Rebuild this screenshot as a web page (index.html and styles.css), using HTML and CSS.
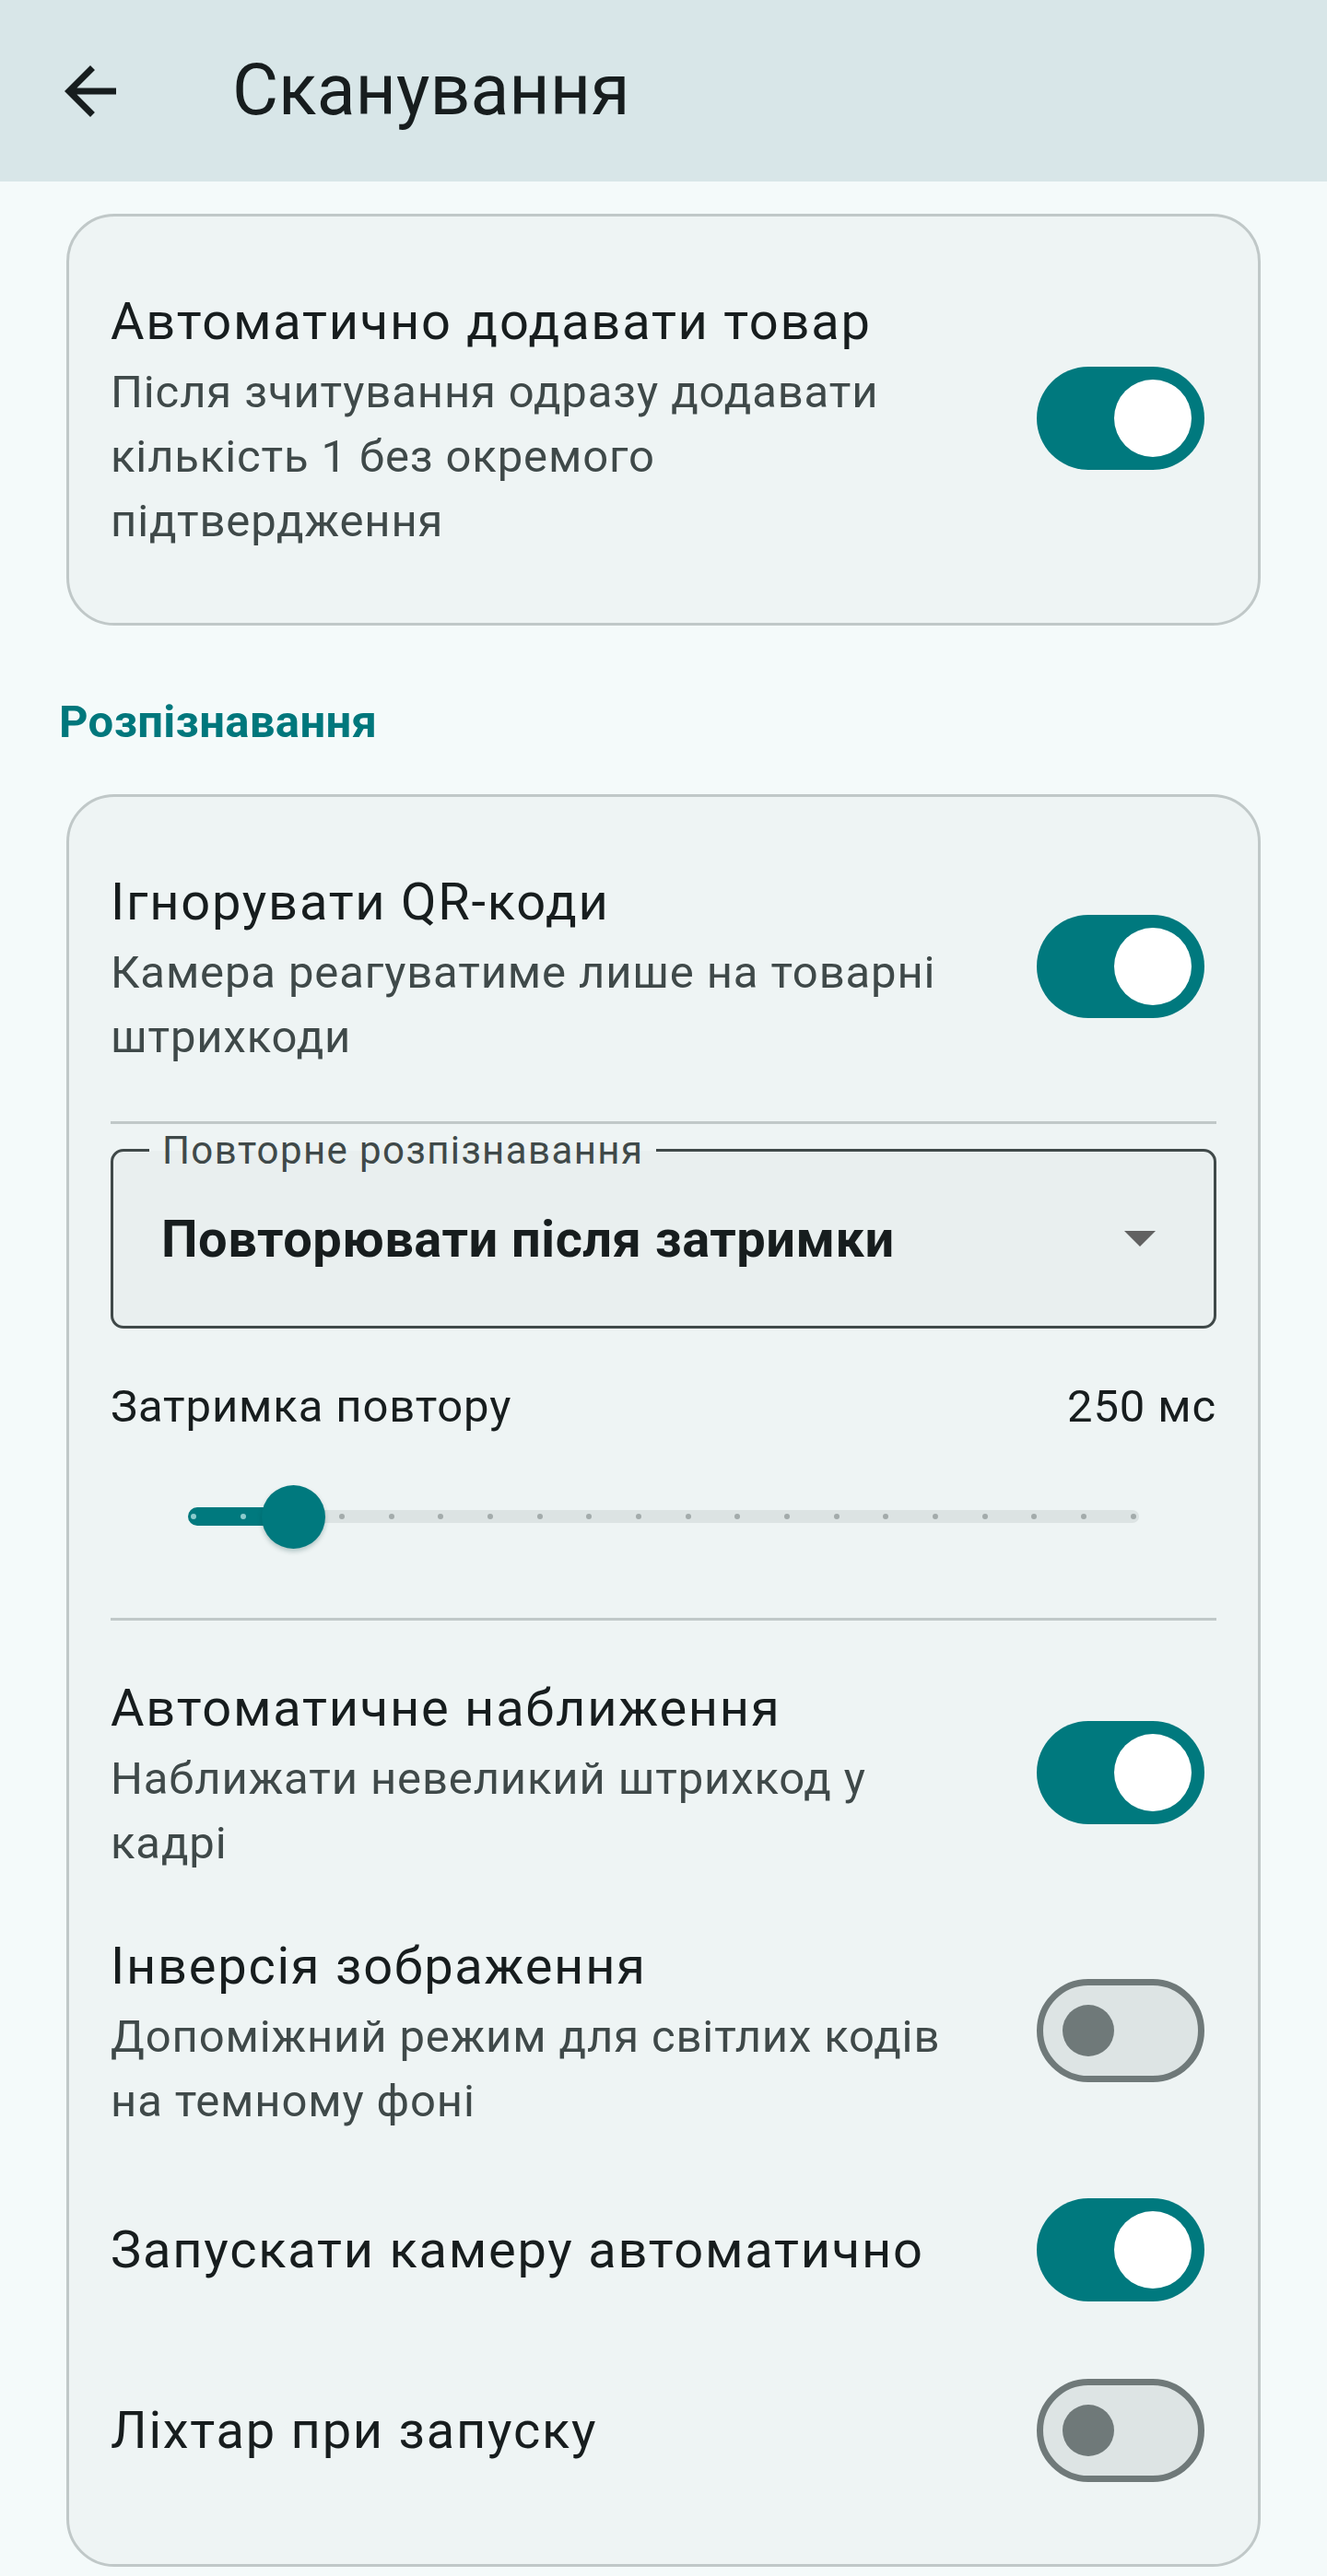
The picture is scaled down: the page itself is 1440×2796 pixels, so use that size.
FILE: index.html
```html
<!DOCTYPE html>
<html lang="uk">

<head>
    <meta charset="UTF-8">
    <meta name="viewport" content="width=device-width, initial-scale=1.0">
    <title>Сканування</title>
    <link rel="stylesheet" href="styles.css">
</head>

<body>
    <header class="topbar">
        <button class="back" aria-label="Назад">
            <svg viewBox="0 0 24 24" width="84" height="84">
                <path d="M20 11H7.83l5.59-5.59L12 4l-8 8 8 8 1.41-1.41L7.83 13H20v-2z"/>
            </svg>
        </button>
        <h1>Сканування</h1>
    </header>

    <main class="content">
        <section class="card">
            <div class="row">
                <div class="row-text">
                    <div class="title">Автоматично додавати товар</div>
                    <div class="desc">Після зчитування одразу додавати кількість 1 без окремого підтвердження</div>
                </div>
                <span class="switch on"><span class="knob"></span></span>
            </div>
        </section>

        <h2 class="section-title">Розпізнавання</h2>

        <section class="card">
            <div class="row">
                <div class="row-text">
                    <div class="title">Ігнорувати QR-коди</div>
                    <div class="desc">Камера реагуватиме лише на товарні штрихкоди</div>
                </div>
                <span class="switch on"><span class="knob"></span></span>
            </div>

            <hr class="divider">

            <div class="select">
                <span class="select-label">Повторне розпізнавання</span>
                <span class="select-value">Повторювати після затримки</span>
                <span class="caret"></span>
            </div>

            <div class="slider-head">
                <span>Затримка повтору</span>
                <span>250 мс</span>
            </div>
            <div class="slider">
                <div class="track">
                    <span class="fill" style="width: 11%"></span>
                    <span class="tick active"></span>
                    <span class="tick active"></span>
                    <span class="tick"></span>
                    <span class="tick"></span>
                    <span class="tick"></span>
                    <span class="tick"></span>
                    <span class="tick"></span>
                    <span class="tick"></span>
                    <span class="tick"></span>
                    <span class="tick"></span>
                    <span class="tick"></span>
                    <span class="tick"></span>
                    <span class="tick"></span>
                    <span class="tick"></span>
                    <span class="tick"></span>
                    <span class="tick"></span>
                    <span class="tick"></span>
                    <span class="tick"></span>
                    <span class="tick"></span>
                    <span class="tick"></span>
                    <span class="thumb" style="left: 11%"></span>
                </div>
            </div>

            <hr class="divider divider-low">

            <div class="row">
                <div class="row-text">
                    <div class="title">Автоматичне наближення</div>
                    <div class="desc">Наближати невеликий штрихкод у кадрі</div>
                </div>
                <span class="switch on"><span class="knob"></span></span>
            </div>
            <div class="row">
                <div class="row-text">
                    <div class="title">Інверсія зображення</div>
                    <div class="desc">Допоміжний режим для світлих кодів на темному фоні</div>
                </div>
                <span class="switch off"><span class="knob"></span></span>
            </div>
            <div class="row">
                <div class="row-text">
                    <div class="title">Запускати камеру автоматично</div>
                </div>
                <span class="switch on"><span class="knob"></span></span>
            </div>
            <div class="row">
                <div class="row-text">
                    <div class="title">Ліхтар при запуску</div>
                </div>
                <span class="switch off"><span class="knob"></span></span>
            </div>
        </section>
    </main>
</body>

</html>
```

FILE: styles.css
```css
* {
    margin: 0;
    padding: 0;
    box-sizing: border-box;
}

body {
    font-family: Roboto, 'Noto Sans', sans-serif;
    background: #f4fafa;
    color: #171d1e;
    min-height: 2796px;
}

/* top app bar */
.topbar {
    height: 197px;
    background: #d8e6e8;
    display: flex;
    align-items: center;
    padding-left: 56px;
}

.back {
    width: 84px;
    height: 84px;
    border: none;
    background: none;
    display: flex;
}

.back svg {
    fill: #171d1e;
}

.topbar h1 {
    font-size: 77px;
    font-weight: 400;
    line-height: 1;
    margin-left: 112px;
}

.content {
    padding: 35px 72px 12px;
}

.card {
    background: #eef4f4;
    border: 3px solid #c0c8c8;
    border-radius: 52px;
    padding: 44px 45px 47px;
}

.section-title {
    font-size: 49px;
    font-weight: 700;
    line-height: 70px;
    letter-spacing: 0.35px;
    color: #00777c;
    margin: 70px 0 43px -8px;
}

/* rows with switch */
.row {
    display: flex;
    align-items: center;
    min-height: 196px;
    padding: 28px 0;
}

.row-text {
    flex: 1;
    margin-right: 85px;
}

.title {
    font-size: 56px;
    line-height: 84px;
    letter-spacing: 1.75px;
    color: #171d1e;
}

.desc {
    font-size: 49px;
    line-height: 70px;
    letter-spacing: 0.875px;
    color: #3f4949;
}

.switch {
    width: 182px;
    height: 112px;
    border-radius: 56px;
    margin-right: 13px;
    flex-shrink: 0;
    display: flex;
    align-items: center;
}

.switch.on {
    background: #00797e;
    justify-content: flex-end;
    padding-right: 14px;
}

.switch.on .knob {
    width: 84px;
    height: 84px;
    border-radius: 50%;
    background: #fff;
}

.switch.off {
    background: #dde4e4;
    border: 7px solid #6f7979;
    padding-left: 21px;
}

.switch.off .knob {
    width: 56px;
    height: 56px;
    border-radius: 50%;
    background: #6f7979;
}

.divider {
    border: none;
    height: 3px;
    background: #c0c8c8;
    margin-top: 28px;
}

.divider-low {
    margin-top: 26px;
    margin-bottom: 25px;
}

/* dropdown */
.select {
    position: relative;
    margin-top: 27px;
    height: 195px;
    border: 3px solid #404949;
    border-radius: 14px;
    background: #e9efef;
    display: flex;
    align-items: center;
    justify-content: space-between;
    padding-left: 52px;
}

.select-label {
    position: absolute;
    left: 39px;
    top: -22px;
    padding: 0 14px;
    font-size: 42px;
    line-height: 42px;
    letter-spacing: 1.4px;
    color: #3f4949;
    background: linear-gradient(#eef4f4 50%, #e9efef 50%);
}

.select-value {
    font-size: 56px;
    font-weight: 700;
    letter-spacing: 0.5px;
    color: #171d1e;
}

.caret {
    width: 0;
    height: 0;
    border-left: 17px solid transparent;
    border-right: 17px solid transparent;
    border-top: 17px solid #616161;
    margin-right: 63px;
}

/* slider */
.slider-head {
    display: flex;
    justify-content: space-between;
    margin-top: 50px;
    font-size: 49px;
    line-height: 70px;
    letter-spacing: 0.875px;
    color: #171d1e;
}

.slider {
    height: 168px;
    padding: 0 84px;
    display: flex;
    align-items: center;
}

.track {
    position: relative;
    flex: 1;
    height: 14px;
    border-radius: 7px;
    background: #dce3e3;
    display: flex;
    align-items: center;
    justify-content: space-between;
    padding: 0 3px;
}

.fill {
    position: absolute;
    left: 0;
    top: -3px;
    height: 20px;
    border-radius: 10px 0 0 10px;
    background: #00797e;
}

.tick {
    position: relative;
    width: 6px;
    height: 6px;
    border-radius: 50%;
    background: #a3abab;
}

.tick.active {
    background: #8ccbcd;
}

.thumb {
    position: absolute;
    top: 50%;
    width: 69px;
    height: 69px;
    margin: -34px 0 0 -34px;
    border-radius: 50%;
    background: #00797e;
    box-shadow: 0 3px 5px rgba(0, 60, 60, 0.25);
}
```
